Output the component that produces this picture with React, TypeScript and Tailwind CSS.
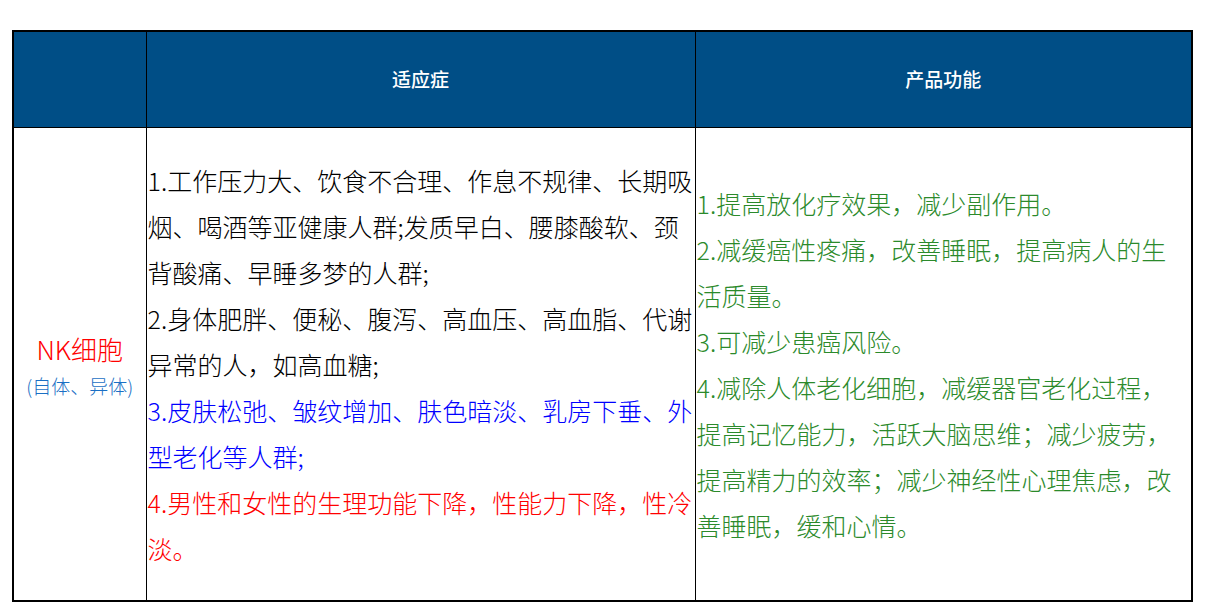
const font = { fontFamily: '"Noto Sans CJK SC", "Noto Sans", sans-serif' };

export default function App() {
  return (
    <div className="min-h-[611px] bg-white pt-[30px] pl-[12px]" style={font}>
      <table className="w-[1179px] border-collapse border-2 border-black table-fixed">
        <colgroup>
          <col className="w-[133px]" />
          <col className="w-[549px]" />
          <col className="w-[497px]" />
        </colgroup>
        <thead>
          <tr className="h-[96px] bg-[#004e86] text-white text-[19px]">
            <th className="border border-black"></th>
            <th className="border border-black font-medium">适应症</th>
            <th className="border border-black font-medium">产品功能</th>
          </tr>
        </thead>
        <tbody>
          <tr className="h-[474px]">
            <td className="border border-black text-center align-middle font-light">
              <div className="text-[26px] text-[#ff0000] leading-[44px]">NK细胞</div>
              <div className="text-[19px] text-[#1a6fc4] leading-[30px] whitespace-nowrap">(自体、异体)</div>
            </td>
            <td className="border border-black align-middle pl-[1px] text-[25px] leading-[46px] text-black font-light">
              <p>1.工作压力大、饮食不合理、作息不规律、长期吸烟、喝酒等亚健康人群;发质早白、腰膝酸软、颈背酸痛、早睡多梦的人群;</p>
              <p>2.身体肥胖、便秘、腹泻、高血压、高血脂、代谢异常的人，如高血糖;</p>
              <p className="text-[#0000ff]">3.皮肤松弛、皱纹增加、肤色暗淡、乳房下垂、外型老化等人群;</p>
              <p className="text-[#ff0000]">4.男性和女性的生理功能下降，性能力下降，性冷淡。</p>
            </td>
            <td className="border border-black align-middle pl-[1px] text-[25px] leading-[46px] text-[#2b8a2b] font-light">
              <p>1.提高放化疗效果，减少副作用。</p>
              <p>2.减缓癌性疼痛，改善睡眠，提高病人的生活质量。</p>
              <p>3.可减少患癌风险。</p>
              <p>4.减除人体老化细胞，减缓器官老化过程，提高记忆能力，活跃大脑思维；减少疲劳，提高精力的效率；减少神经性心理焦虑，改善睡眠，缓和心情。</p>
            </td>
          </tr>
        </tbody>
      </table>
    </div>
  );
}
